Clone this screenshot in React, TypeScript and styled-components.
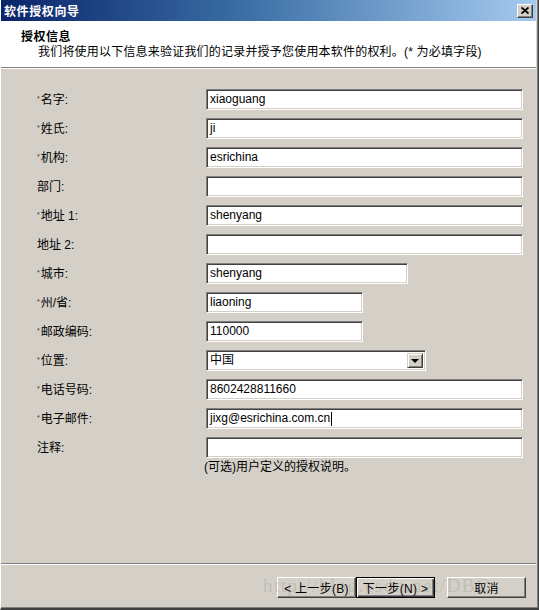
import React from 'react'
import styled, { createGlobalStyle } from 'styled-components'

const Global = createGlobalStyle`
  html, body { margin: 0; padding: 0; background: #d4d0c8; }
  body { font-family: "Liberation Sans", "Noto Sans CJK SC", sans-serif; font-size: 12px; color: #000; }
`

const Window = styled.div`
  position: relative;
  width: 539px;
  height: 610px;
  box-sizing: border-box;
  display: flex;
  flex-direction: column;
  background: #d4d0c8;
  border-left: 1px solid #ffffff;
  border-right: 1px solid #404040;
  border-bottom: 2px solid #404040;
  box-shadow: inset -1px 0 #808080, inset 0 -1px #808080;
  overflow: hidden;
`

const TitleBar = styled.div`
  height: 21px;
  margin-right: 2px;
  display: flex;
  align-items: center;
  justify-content: space-between;
  padding: 0 3px 0 3px;
  background: linear-gradient(to right, #0a246a 0%, #3a6ea5 45%, #a6caf0 100%);
  color: #fff;
  font-weight: bold;
  font-size: 12px;
  letter-spacing: 0.6px;
`

const CloseBtn = styled.div`
  width: 16px;
  height: 14px;
  box-sizing: border-box;
  background: #d4d0c8;
  border-top: 1px solid #fff;
  border-left: 1px solid #fff;
  border-right: 1px solid #404040;
  border-bottom: 1px solid #404040;
  box-shadow: inset -1px -1px #808080;
  display: flex;
  align-items: center;
  justify-content: center;
`

const Header = styled.div`
  height: 47px;
  margin-right: 2px;
  background: #fff;
  border-bottom: 1px solid #808080;
  box-shadow: 0 1px #ffffff;
  padding: 10px 0 0 20px;
  box-sizing: border-box;
`

const HeaderTitle = styled.div`
  font-weight: bold;
  line-height: 13px;
  letter-spacing: 0.5px;
`

const HeaderSub = styled.div`
  margin-left: 17px;
  margin-top: 1px;
  line-height: 14px;
  letter-spacing: 0.2px;
`

const Form = styled.div`
  display: grid;
  grid-template-columns: 169px 317px;
  grid-auto-rows: 21px;
  row-gap: 8px;
  padding: 21px 0 0 36px;
`

const Label = styled.div`
  display: flex;
  align-items: center;
  height: 21px;
  padding-bottom: 2px;
  box-sizing: border-box;
`

const Star = styled.span`
  font-size: 7px;
  line-height: 7px;
  color: #333;
  margin-right: 1px;
  position: relative;
  top: 0px;
`

const Field = styled.div<{ $w: number }>`
  position: relative;
  width: ${p => p.$w}px;
  height: 21px;
  box-sizing: border-box;
  background: #fff;
  border-top: 1px solid #808080;
  border-left: 1px solid #808080;
  border-right: 1px solid #ffffff;
  border-bottom: 1px solid #ffffff;
  box-shadow: inset 1px 1px #404040, inset -1px -1px #d4d0c8;
  padding: 0 3px;
  display: flex;
  align-items: center;
  line-height: 17px;
  font-family: "Liberation Sans", "Noto Sans CJK SC", sans-serif;
`

const Caret = styled.span`
  display: inline-block;
  width: 1px;
  height: 14px;
  background: #000;
  margin-left: 1px;
`

const DropBtn = styled.div`
  position: absolute;
  right: 2px;
  top: 2px;
  width: 16px;
  height: 15px;
  box-sizing: border-box;
  background: #d4d0c8;
  border-top: 1px solid #d4d0c8;
  border-left: 1px solid #d4d0c8;
  border-right: 1px solid #404040;
  border-bottom: 1px solid #404040;
  box-shadow: inset 1px 1px #fff, inset -1px -1px #808080;
  display: flex;
  align-items: center;
  justify-content: center;
`

const Arrow = styled.div`
  width: 0;
  height: 0;
  border-left: 4px solid transparent;
  border-right: 4px solid transparent;
  border-top: 4px solid #000;
`

const Hint = styled.div`
  grid-column: 2;
  margin-top: -6px;
  margin-left: -2px;
  line-height: 14px;
`

const Spacer = styled.div`
  flex: 1;
`

const Divider = styled.div`
  height: 1px;
  margin-right: 2px;
  background: #808080;
  border-bottom: 1px solid #fff;
`

const Footer = styled.div`
  display: flex;
  justify-content: flex-end;
  padding: 12px 12px 10px 0;
`

const Button = styled.div<{ $def?: boolean; $gap?: number }>`
  width: 79px;
  height: 21px;
  box-sizing: border-box;
  margin-left: ${p => p.$gap ?? 0}px;
  display: flex;
  align-items: center;
  justify-content: center;
  background: #d4d0c8;
  white-space: pre;
  letter-spacing: 0.3px;
  border: 1px solid;
  border-color: ${p => (p.$def ? '#000' : '#fff #404040 #404040 #fff')};
  box-shadow: ${p =>
    p.$def ? 'inset 1px 1px #fff, inset -1px -1px #404040, inset -2px -2px #808080' : 'inset -1px -1px #808080'};
`

const Watermark = styled.div`
  position: absolute;
  left: 262px;
  top: 575px;
  font-family: "Liberation Serif", serif;
  font-size: 19px;
  letter-spacing: 1.5px;
  color: rgba(110, 110, 110, 0.2);
  pointer-events: none;
`

type Row = { label: string; req?: boolean; value?: string; w: number; select?: boolean; caret?: boolean }

const rows: Row[] = [
  { label: '名字:', req: true, value: 'xiaoguang', w: 317 },
  { label: '姓氏:', req: true, value: 'ji', w: 317 },
  { label: '机构:', req: true, value: 'esrichina', w: 317 },
  { label: '部门:', w: 317 },
  { label: '地址 1:', req: true, value: 'shenyang', w: 317 },
  { label: '地址 2:', w: 317 },
  { label: '城市:', req: true, value: 'shenyang', w: 202 },
  { label: '州/省:', req: true, value: 'liaoning', w: 157 },
  { label: '邮政编码:', req: true, value: '110000', w: 157 },
  { label: '位置:', req: true, value: '中国', w: 220, select: true },
  { label: '电话号码:', req: true, value: '8602428811660', w: 317 },
  { label: '电子邮件:', req: true, value: 'jixg@esrichina.com.cn', w: 317, caret: true },
  { label: '注释:', w: 317 },
]

export default function App() {
  return (
    <>
      <Global />
      <Window>
        <TitleBar>
          <span>软件授权向导</span>
          <CloseBtn>
            <svg width="8" height="7" viewBox="0 0 8 7">
              <path d="M0.5 0.5 L7.5 6.5 M7.5 0.5 L0.5 6.5" stroke="#000" strokeWidth="1.8" />
            </svg>
          </CloseBtn>
        </TitleBar>
        <Header>
          <HeaderTitle>授权信息</HeaderTitle>
          <HeaderSub>我们将使用以下信息来验证我们的记录并授予您使用本软件的权利。(* 为必填字段)</HeaderSub>
        </Header>
        <Form>
          {rows.map((r, i) => (
            <React.Fragment key={i}>
              <Label>
                {r.req && <Star>*</Star>}
                {r.label}
              </Label>
              <div>
                <Field $w={r.w}>
                  {r.value}
                  {r.caret && <Caret />}
                  {r.select && (
                    <DropBtn>
                      <Arrow />
                    </DropBtn>
                  )}
                </Field>
              </div>
            </React.Fragment>
          ))}
          <Hint>(可选)用户定义的授权说明。</Hint>
        </Form>
        <Spacer />
        <Divider />
        <Footer>
          <Button>{'< 上一步(B)'}</Button>
          <Button $def>{'下一步(N) >'}</Button>
          <Button $gap={12}>取消</Button>
        </Footer>
        <Watermark>http://blog.csdn.net/DBC</Watermark>
      </Window>
    </>
  )
}
